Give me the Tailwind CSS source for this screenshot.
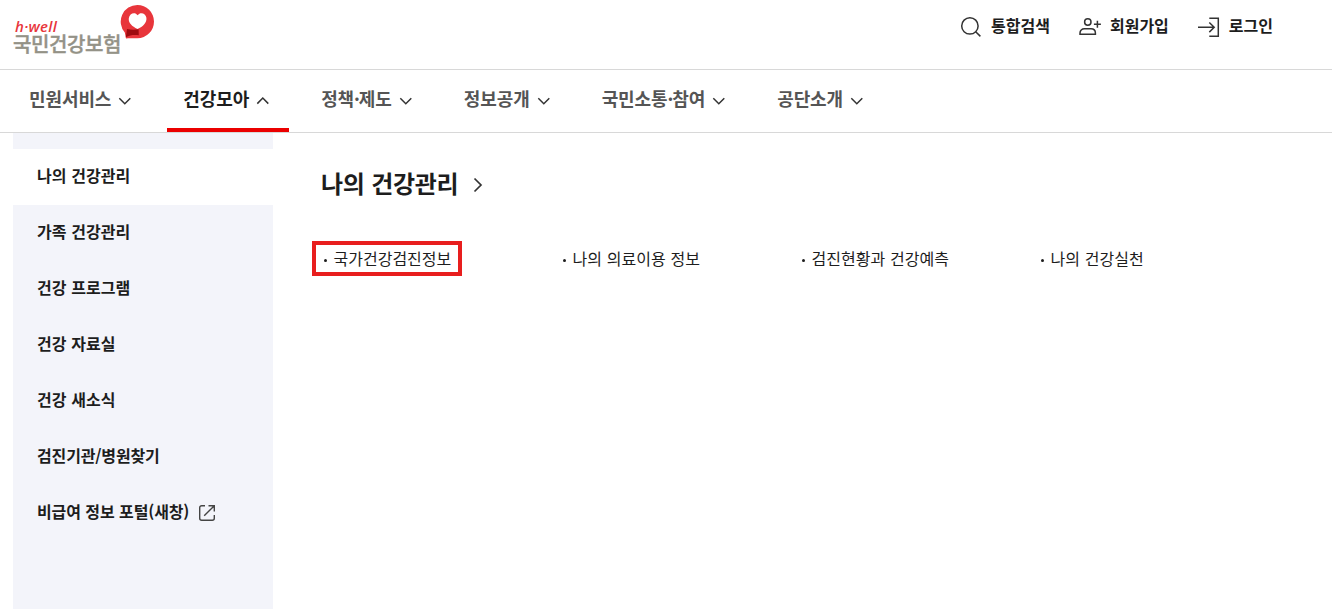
<!DOCTYPE html>
<html lang="ko">
<head>
    <meta charset="UTF-8">
    <meta name="viewport" content="width=device-width, initial-scale=1.0">
    <title>국민건강보험</title>
    <script src="https://cdn.jsdelivr.net/npm/@tailwindcss/browser@4"></script>
</head>
<body class="bg-white text-[#1d1d1d] font-['Noto_Sans_CJK_KR',sans-serif] h-screen flex flex-col overflow-hidden">
    <header class="h-[70px] shrink-0 border-b border-[#d8d8d8] flex justify-between pl-[13px] pr-[59px]">
        <a href="#" class="relative block w-[142px] pt-[18px]">
            <span class="block h-[16px] pl-[2px] text-[15px] leading-[17px] tracking-[0.3px] font-semibold italic text-[#e8353b] font-['Open_Sans',sans-serif]">h·well</span>
            <span class="block text-[20px] leading-[20px] font-medium tracking-[-0.4px] text-[#949287] whitespace-nowrap [-webkit-text-stroke:0.4px_#949287]">국민건강보험</span>
            <svg class="absolute left-[107px] top-[4px]" width="36" height="36" viewBox="0 0 36 36">
                <path d="M17.400 1a16.600 16.600 0 1 1 0 33.200C13 34.400 10 34 6 34.400L4.800 28.500A16.600 16.600 0 0 1 17.400 1z" fill="#e8353b"/>
                <path d="M7 25c4 .9 7.500.9 11.600.3l.2 5.900c-4.800-.6-8.600-.3-13 2z" fill="#9e0b0f"/>
                <path d="M17.500 25c-5.500-2.500-9.300-6.200-8.700-10.700.7-5 6.200-6.800 8.800-3 2.700-3.800 8.200-2 8.800 2.500.6 4.900-3.300 8.900-8.900 11.200z" fill="#fff"/>
            </svg>
        </a>
        <div class="flex h-[52px] items-center gap-[28px] pb-[2px] font-bold text-base">
            <a href="#" class="flex items-center gap-2">
                <svg width="24" height="24" viewBox="0 0 24 24" fill="none" stroke="#333" stroke-width="1.500" class="mt-[4px]"><circle cx="10.900" cy="10.900" r="8.200"/><path d="M16.700 16.700l4.700 4.700"/></svg>
                통합검색
            </a>
            <a href="#" class="flex items-center gap-2">
                <svg width="24" height="24" viewBox="0 0 24 24" fill="none" stroke="#333" stroke-width="1.500" class="mt-[4px]"><circle cx="9.800" cy="7" r="3.200"/><path d="M2 19.300v-1.200c0-2.500 1.800-4.300 4.400-4.300h6.600c2.600 0 4.400 1.800 4.400 4.300v1.200zM15.900 9.300h7M19.400 5.800v7"/></svg>
                회원가입
            </a>
            <a href="#" class="flex items-center gap-2">
                <svg width="24" height="24" viewBox="0 0 24 24" fill="none" stroke="#333" stroke-width="1.500" class="mt-[4px]"><path d="M12.300 3.200h9v18.100h-9M1 12.300h16.500M12.300 7.500l4.900 4.800-4.900 4.800"/></svg>
                로그인
            </a>
        </div>
    </header>

    <nav class="h-[63px] shrink-0 border-b border-[#d8d8d8] flex gap-4 pl-[13px] text-[18px] tracking-[-0.1px] font-bold text-[#555]">
        <a href="#" class="flex items-center gap-1 px-4 pb-[6px]">민원서비스
            <svg width="20" height="20" viewBox="0 0 20 20" fill="none" stroke="#333" stroke-width="1.500" class="mt-[6px]"><path d="M4.300 7.200l5.500 5.600 5.500-5.600"/></svg>
        </a>
        <a href="#" class="relative flex items-center gap-1 px-4 pb-[6px] text-[#1d1d1d]">건강모아
            <svg width="20" height="20" viewBox="0 0 20 20" fill="none" stroke="#333" stroke-width="1.500" class="mt-[6px]"><path d="M4.300 12.600L9.800 7l5.500 5.600"/></svg>
            <span class="absolute inset-x-0 bottom-0 h-1 bg-[#eb0000]"></span>
        </a>
        <a href="#" class="flex items-center gap-1 px-4 pb-[6px]"><span>정책<span class="-mr-px">·</span>제도</span>
            <svg width="20" height="20" viewBox="0 0 20 20" fill="none" stroke="#333" stroke-width="1.500" class="mt-[6px]"><path d="M4.300 7.200l5.500 5.600 5.500-5.600"/></svg>
        </a>
        <a href="#" class="flex items-center gap-1 px-4 pb-[6px]">정보공개
            <svg width="20" height="20" viewBox="0 0 20 20" fill="none" stroke="#333" stroke-width="1.500" class="mt-[6px]"><path d="M4.300 7.200l5.500 5.600 5.500-5.600"/></svg>
        </a>
        <a href="#" class="flex items-center gap-1 px-4 pb-[6px]"><span>국민소통<span class="-mr-px">·</span>참여</span>
            <svg width="20" height="20" viewBox="0 0 20 20" fill="none" stroke="#333" stroke-width="1.500" class="mt-[6px]"><path d="M4.300 7.200l5.500 5.600 5.500-5.600"/></svg>
        </a>
        <a href="#" class="flex items-center gap-1 px-4 pb-[6px]">공단소개
            <svg width="20" height="20" viewBox="0 0 20 20" fill="none" stroke="#333" stroke-width="1.500" class="mt-[6px]"><path d="M4.300 7.200l5.500 5.600 5.500-5.600"/></svg>
        </a>
    </nav>

    <main class="flex flex-1 pl-[13px]">
        <ul class="w-[260px] shrink-0 bg-[#f3f4fa] pt-4 font-bold text-base [word-spacing:0.3px]">
            <li class="flex h-14 items-center px-6 pb-[4px] bg-white">나의 건강관리</li>
            <li class="flex h-14 items-center px-6 pb-[4px]">가족 건강관리</li>
            <li class="flex h-14 items-center px-6 pb-[4px]">건강 프로그램</li>
            <li class="flex h-14 items-center px-6 pb-[4px]">건강 자료실</li>
            <li class="flex h-14 items-center px-6 pb-[4px]">건강 새소식</li>
            <li class="flex h-14 items-center px-6 pb-[4px] tracking-[-0.15px]">검진기관/병원찾기</li>
            <li class="flex h-14 items-center gap-2 px-6 pb-[4px] tracking-[-0.15px]">비급여 정보 포털(새창)
                <svg width="20" height="20" viewBox="0 0 20 20" fill="none" stroke="#444" stroke-width="1.400" class="mt-[4px]"><path d="M8 2.700H4.700a2 2 0 0 0-2 2v10.600a2 2 0 0 0 2 2h10.600a2 2 0 0 0 2-2V12M11.500 2.700h5.800v5.800M17.300 2.700L7.200 12.800"/></svg>
            </li>
        </ul>
        <section class="flex-1 pl-12 pt-8">
            <h2 class="flex items-center gap-[11px] text-[24px] leading-[36px] tracking-[-0.25px] font-bold">나의 건강관리
                <svg width="18" height="18" viewBox="0 0 18 18" fill="none" stroke="#333" stroke-width="1.700" class="mt-[4px]"><path d="M5.500 2.500L12 9l-6.500 6.500"/></svg>
            </h2>
            <ul class="mt-[40px] -ml-[9px] flex text-base [word-spacing:0.4px]">
                <li class="w-[239px]"><a href="#" class="flex w-[150px] h-[35px] items-center border-4 border-[#e81e1e] pl-2 pb-[1px] whitespace-nowrap"><i class="mt-[4px] mr-[6.500px] size-[3px] rounded-full bg-[#1d1d1d]"></i>국가건강검진정보</a></li>
                <li class="w-[239px]"><a href="#" class="flex h-[35px] items-center pl-3 pb-[1px]"><i class="mt-[4px] mr-[6.500px] size-[3px] rounded-full bg-[#1d1d1d]"></i>나의 의료이용 정보</a></li>
                <li class="w-[239px]"><a href="#" class="flex h-[35px] items-center pl-3 pb-[1px]"><i class="mt-[4px] mr-[6.500px] size-[3px] rounded-full bg-[#1d1d1d]"></i>검진현황과 건강예측</a></li>
                <li class="w-[239px]"><a href="#" class="flex h-[35px] items-center pl-3 pb-[1px]"><i class="mt-[4px] mr-[6.500px] size-[3px] rounded-full bg-[#1d1d1d]"></i>나의 건강실천</a></li>
            </ul>
        </section>
    </main>
</body>
</html>
